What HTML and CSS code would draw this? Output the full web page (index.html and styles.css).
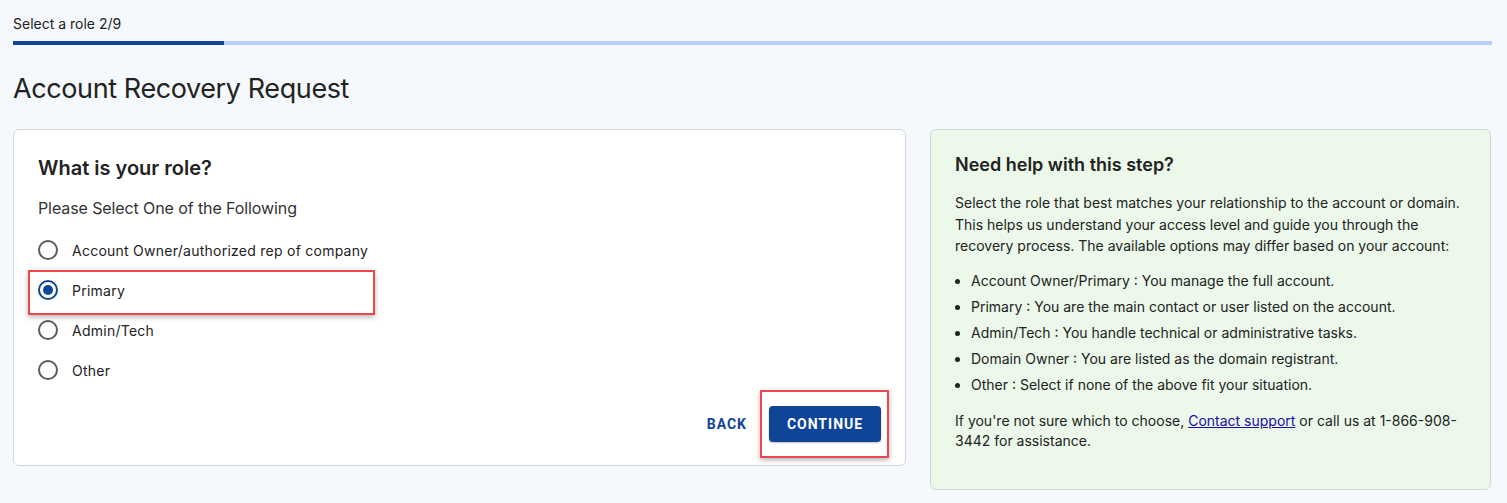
FILE: index.html
```html
<!DOCTYPE html>
<html lang="en">
<head>
    <meta charset="UTF-8">
    <meta name="viewport" content="width=device-width, initial-scale=1.0">
    <link rel="stylesheet" href="styles.css">
    <title>Account Recovery Request</title>
</head>
<body>
    <div class="page">
        <div class="step_label">Select a role 2/9</div>
        <div class="progress"><div class="progress_fill"></div></div>

        <h1 class="title">Account Recovery Request</h1>

        <div class="columns">
            <div class="card role_card">
                <h2>What is your role?</h2>
                <p class="sub">Please Select One of the Following</p>

                <div class="options">
                    <label class="option">
                        <span class="radio"></span>
                        <span>Account Owner/authorized rep of company</span>
                    </label>
                    <label class="option picked">
                        <span class="radio on"></span>
                        <span>Primary</span>
                        <span class="mark mark_option"></span>
                    </label>
                    <label class="option">
                        <span class="radio"></span>
                        <span>Admin/Tech</span>
                    </label>
                    <label class="option">
                        <span class="radio"></span>
                        <span>Other</span>
                    </label>
                </div>

                <div class="actions">
                    <button class="btn_back">BACK</button>
                    <span class="btn_wrap">
                        <button class="btn_continue">CONTINUE</button>
                        <span class="mark mark_btn"></span>
                    </span>
                </div>
            </div>

            <div class="card help_card">
                <h3>Need help with this step?</h3>
                <p>Select the role that best matches your relationship to the account or domain. This helps us understand your access level and guide you through the recovery process. The available options may differ based on your account:</p>
                <ul>
                    <li>Account Owner/Primary : You manage the full account.</li>
                    <li>Primary : You are the main contact or user listed on the account.</li>
                    <li>Admin/Tech : You handle technical or administrative tasks.</li>
                    <li>Domain Owner : You are listed as the domain registrant.</li>
                    <li>Other : Select if none of the above fit your situation.</li>
                </ul>
                <p class="last">If you're not sure which to choose, <a href="#">Contact support</a> or call us at 1-866-908-3442 for assistance.</p>
            </div>
        </div>
    </div>
</body>
</html>
```

FILE: styles.css
```css
*{
    margin:0;
    padding:0;
    box-sizing: border-box;
}

body{
    background-color: #f5f9fd;
    font-family: Inter, "Noto Sans", sans-serif;
    color: #222;
}

.page{
    padding: 14px 15px 0 13px;
}

.step_label{
    font-size: 14px;
    line-height: 20px;
    color: #222;
}

.progress{
    margin-top: 7px;
    height: 4px;
    background-color: #b6d1f4;
}

.progress_fill{
    width: 211px;
    height: 100%;
    background-color: #0f4499;
}

.title{
    margin-top: 26px;
    font-size: 27px;
    letter-spacing: -0.4px;
    line-height: 36px;
    font-weight: 400;
    color: #222;
}

.columns{
    margin-top: 22px;
    display: grid;
    grid-template-columns: 893px 561px;
    gap: 24px;
    align-items: start;
}

.card{
    border: 1px solid #d3d7dc;
    border-radius: 6px;
}

.role_card{
    background-color: #fff;
    padding: 24px 24px 23px 24px;
}

.role_card h2{
    font-size: 20px;
    line-height: 28px;
    font-weight: 600;
    color: #222;
}

.sub{
    margin-top: 14px;
    font-size: 16px;
    line-height: 24px;
    letter-spacing: -0.1px;
    color: #333;
}

.options{
    margin-top: 10px;
}

.option{
    position: relative;
    display: flex;
    align-items: center;
    gap: 14px;
    height: 40px;
    font-size: 14px;
    letter-spacing: 0.25px;
    color: #222;
}

.radio{
    width: 20px;
    height: 20px;
    border: 2px solid #5c5c5c;
    border-radius: 50%;
    display: flex;
    justify-content: center;
    align-items: center;
}

.radio.on{
    border-color: #0f4499;
}

.radio.on::after{
    content: "";
    width: 10px;
    height: 10px;
    border-radius: 50%;
    background-color: #0f4499;
}

.actions{
    margin-top: 16px;
    display: flex;
    justify-content: flex-end;
    align-items: center;
    gap: 22px;
}

.btn_back{
    border: none;
    background: none;
    font-family: Roboto, sans-serif;
    font-weight: 700;
    font-size: 14px;
    letter-spacing: 1px;
    color: #0f4499;
}

.btn_wrap{
    position: relative;
    display: inline-flex;
}

.btn_continue{
    width: 112px;
    height: 36px;
    border: none;
    border-radius: 4px;
    background-color: #0f4499;
    color: #fff;
    font-family: Roboto, sans-serif;
    font-weight: 700;
    font-size: 14px;
    letter-spacing: 1px;
    box-shadow: 0 1px 2px rgba(0,0,0,0.25);
}

/* red annotation boxes */
.mark{
    position: absolute;
    border: 2px solid #f0474b;
    box-shadow: 0 2px 5px rgba(0,0,0,0.3);
    pointer-events: none;
}

.mark_option{
    left: -10px;
    top: 0;
    width: 347px;
    height: 45px;
}

.mark_btn{
    left: -9px;
    top: -16px;
    right: -8px;
    bottom: -16px;
}

.help_card{
    background-color: #ebf8ea;
    padding: 23px 24px 38px 24px;
    font-size: 14px;
    color: #222;
}

.help_card h3{
    font-size: 18px;
    line-height: 24px;
    font-weight: 600;
}

.help_card p{
    margin-top: 15px;
    line-height: 21.5px;
}

.help_card ul{
    margin-top: 13px;
    padding-left: 16px;
}

.help_card li{
    line-height: 21px;
    margin-bottom: 5px;
}

.help_card p.last{
    margin-top: 16px;
    line-height: 20px;
}

.help_card a{
    color: #1a0dab;
}
```
